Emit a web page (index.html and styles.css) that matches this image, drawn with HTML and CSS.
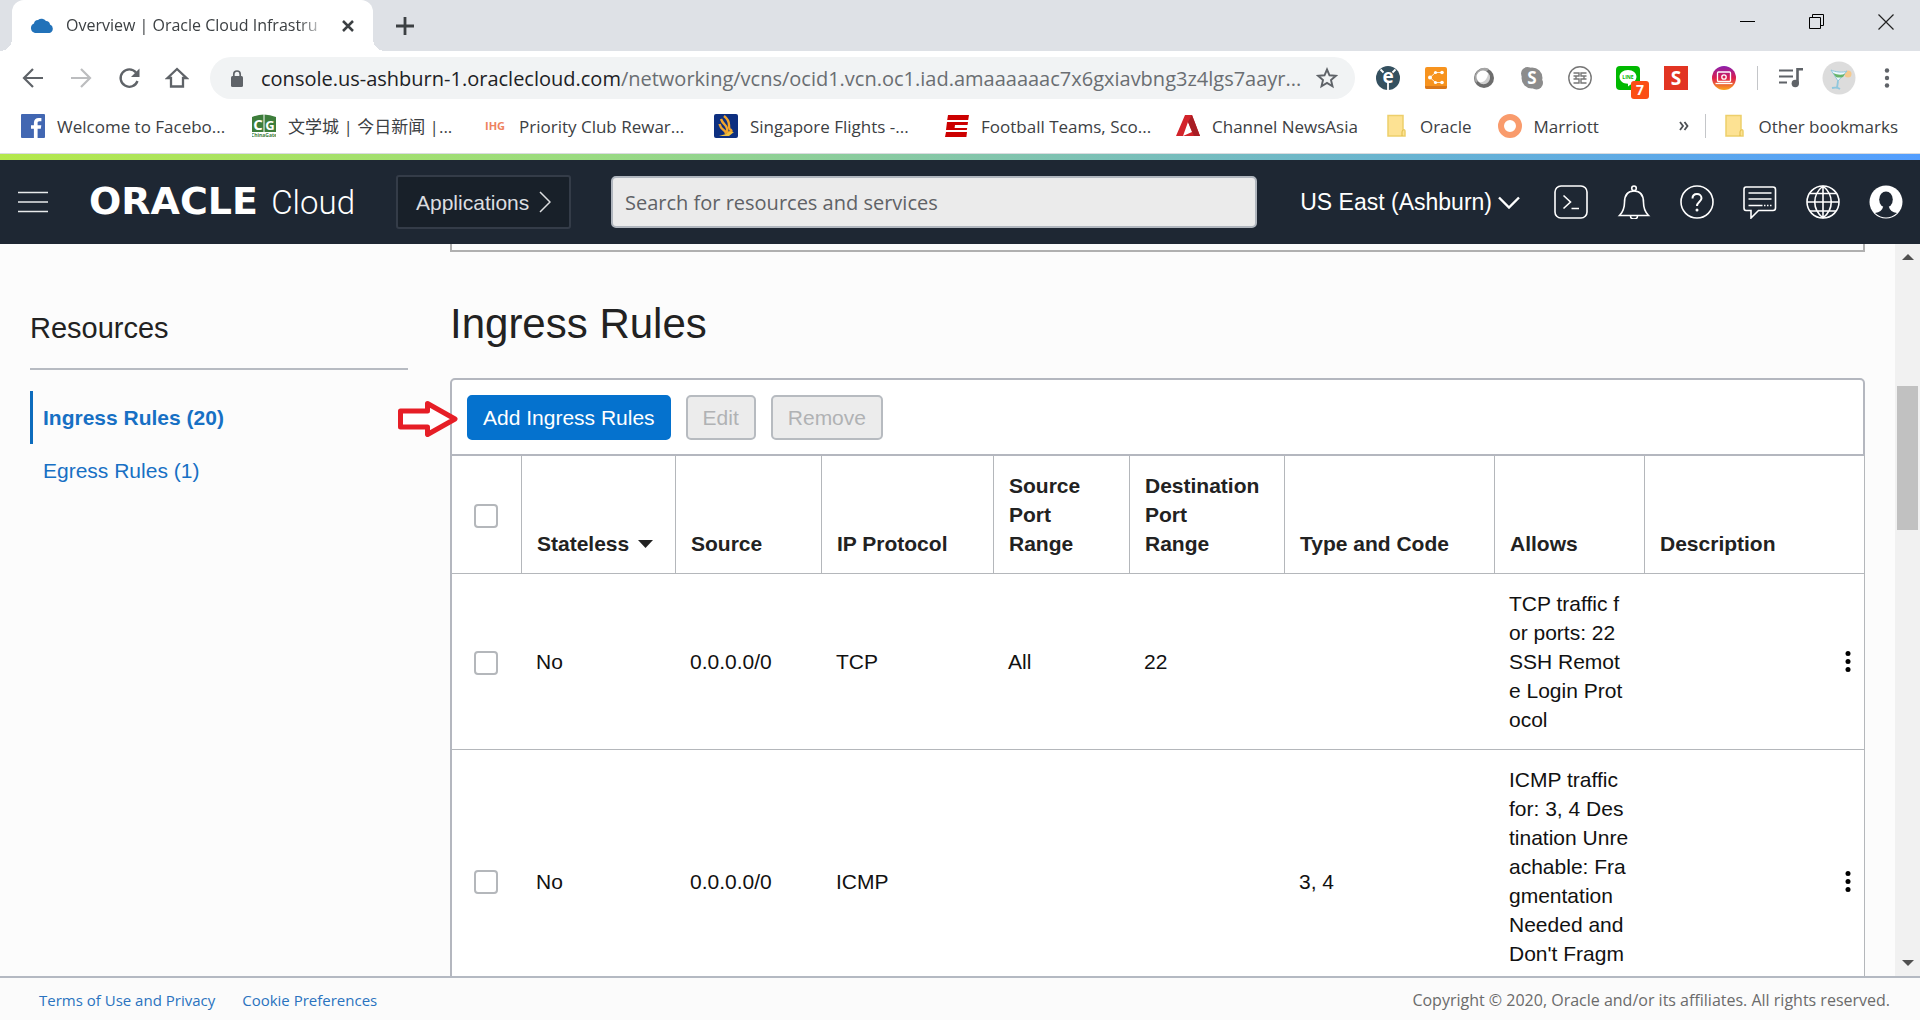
FILE: index.html
```html
<!DOCTYPE html>
<html lang="en">
<head>
<meta charset="utf-8">
<title>Overview | Oracle Cloud Infrastructure</title>
<link rel="stylesheet" href="styles.css">
</head>
<body>
<div class="tabstrip">
  <div class="tab">
    <svg class="tab-icon" width="24" height="16" viewBox="0 0 24 16"><path d="M5 15a5 5 0 0 1-1-9.500A4 4 0 0 1 8 2a5.500 5.500 0 0 1 8 1 4 4 0 0 1 4 3.500A4.500 4.500 0 0 1 19.500 15z" fill="#2272b9"/></svg>
    <span class="tab-title">Overview | Oracle Cloud Infrastru</span>
    <button class="plain" aria-label="Close tab"><svg width="14" height="14" viewBox="0 0 14 14"><path d="M2 2l10 10M12 2L2 12" stroke="#3c4043" stroke-width="2.500"/></svg></button>
  </div>
  <button class="plain new-tab" aria-label="New tab"><svg width="18" height="18" viewBox="0 0 18 18"><path d="M9 0v18M0 9h18" stroke="#3c4043" stroke-width="2.800"/></svg></button>
  <div class="window-controls">
    <button class="plain" aria-label="Minimize"><svg width="16" height="16" viewBox="0 0 16 16"><path d="M0 7.500h15" stroke="#000"/></svg></button>
    <button class="plain" aria-label="Restore"><svg width="16" height="16" viewBox="0 0 16 16" fill="none" stroke="#000"><path d="M.500 3.500h11v11H.500zM3.500 3.500V.500h11v11h-3"/></svg></button>
    <button class="plain" aria-label="Close"><svg width="16" height="16" viewBox="0 0 16 16"><path d="M.500.500l15 15M15.500.500l-15 15" stroke="#222" stroke-width="1.200"/></svg></button>
  </div>
</div>

<div class="toolbar">
  <div class="nav">
    <button class="plain" aria-label="Back"><svg width="24" height="24" viewBox="0 0 24 24" fill="none" stroke="#5f6368" stroke-width="2.200"><path d="M22 12H3.500M12 3l-9 9 9 9"/></svg></button>
    <button class="plain" aria-label="Forward"><svg width="24" height="24" viewBox="0 0 24 24" fill="none" stroke="#bcbdbf" stroke-width="2.200"><path d="M2 12h18.500M12 3l9 9-9 9"/></svg></button>
    <button class="plain" aria-label="Reload"><svg width="24" height="24" viewBox="0 0 24 24"><path d="M19 6.500A8.700 8.700 0 1 0 20.500 15" fill="none" stroke="#5f6368" stroke-width="2.300"/><path d="M22.500 2.500v8.500H14z" fill="#5f6368"/></svg></button>
    <button class="plain" aria-label="Home"><svg width="24" height="24" viewBox="0 0 24 24"><path d="M2.500 12L12 3l9.500 9H18v8.500H6V12z" fill="none" stroke="#5f6368" stroke-width="2.300"/></svg></button>
  </div>
  <div class="omnibox">
    <svg width="12" height="17" viewBox="0 0 12 17"><path d="M2.800 7V4.200a3.200 3.200 0 0 1 6.400 0V7" fill="none" stroke="#5f6368" stroke-width="1.700"/><rect y="6" width="12" height="11" rx="1.500" fill="#5f6368"/></svg>
    <span class="url"><b>console.us-ashburn-1.oraclecloud.com</b>/networking/vcns/ocid1.vcn.oc1.iad.amaaaaaac7x6gxiavbng3z4lgs7aayr...</span>
    <button class="plain" aria-label="Bookmark this page"><svg width="22" height="22" viewBox="0 0 22 22"><path d="M11 2.500l2.500 5.800 6.300.500-4.800 4.200 1.500 6.200L11 15.900l-5.500 3.300L7 13 2.200 8.800l6.300-.500z" fill="none" stroke="#5f6368" stroke-width="1.900"/></svg></button>
  </div>
  <div class="extensions">
    <svg width="24" height="24" viewBox="0 0 24 24"><circle cx="12" cy="12" r="12" fill="#34505f"/><path d="M4.500 3.500l3 3M19.500 3.500l-3 3M12 17v7" stroke="#fff" stroke-width="1.800"/><text x="12" y="17" text-anchor="middle" class="glyph" font-size="19" fill="#fff">e</text></svg>
    <svg width="24" height="24" viewBox="0 0 24 24"><rect x="1" y="1" width="22" height="22" rx="2" fill="#f7931e"/><path d="M1 20h22v1a2 2 0 0 1-2 2H3a2 2 0 0 1-2-2z" fill="#d9771a"/><g fill="#fff"><circle cx="6" cy="11.500" r="2"/><circle cx="11.500" cy="6.500" r="1.600"/><circle cx="11.500" cy="16.500" r="1.600"/><circle cx="18" cy="6.500" r="1.800"/><circle cx="18" cy="16.500" r="1.800"/></g><path d="M6 11.500l5.500-5H18M6 11.500l5.500 5H18" fill="none" stroke="#fff" stroke-width=".8"/></svg>
    <svg width="24" height="24" viewBox="0 0 24 24"><circle cx="12" cy="12" r="10" fill="#6d6d6d"/><path d="M4 17A10 10 0 0 1 17 3z" fill="#a5a5a5"/><circle cx="11" cy="11" r="6.500" fill="#fff"/><path d="M16 7a6.500 6.500 0 0 1-9 9.500c5 .5 9-4 9-9.500z" fill="#d0d0d0"/></svg>
    <svg width="24" height="24" viewBox="0 0 24 24" fill="#8c8c8c"><circle cx="12" cy="12" r="10.500"/><circle cx="7.500" cy="7.500" r="6.500"/><circle cx="16.500" cy="17" r="6.500"/><text x="12" y="18" text-anchor="middle" class="glyph" font-size="17" fill="#fff">S</text></svg>
    <svg width="24" height="24" viewBox="0 0 24 24" fill="none" stroke="#777"><circle cx="12" cy="12" r="11.200" stroke-width="1.400"/><path d="M5.500 7H11v3H5.500M18.500 7H13v3h5.500M5.500 13H11v4H5.500M18.500 13H13v4h5.500M8 10v3M16 10v3" stroke-width="1.400"/></svg>
    <span class="ext-line"><svg width="24" height="24" viewBox="0 0 24 24"><rect width="24" height="24" rx="4" fill="#00b900"/><path d="M12 4c5 0 8.500 3 8.500 6.800 0 3.700-4 6.700-8.500 9.700v-2.700C7 17.800 3.500 15 3.500 10.800 3.500 7 7 4 12 4z" fill="#fff"/><text x="12" y="13" text-anchor="middle" class="glyph" font-size="5" fill="#00b900">LINE</text></svg><span class="badge">7</span></span>
    <svg width="24" height="24" viewBox="0 0 24 24"><rect width="24" height="24" fill="#e23422"/><text x="12" y="19" text-anchor="middle" class="glyph" font-size="19" fill="#fff">S</text></svg>
    <svg width="24" height="24" viewBox="0 0 24 24"><defs><linearGradient id="ig" x1="0" y1="0" x2="0" y2="1"><stop offset="0" stop-color="#8a1fae"/><stop offset=".5" stop-color="#dc1e4e"/><stop offset="1" stop-color="#fba61c"/></linearGradient></defs><circle cx="12" cy="12" r="12" fill="url(#ig)"/><g fill="none" stroke="#fff" stroke-width="1.300"><rect x="5.500" y="6" width="13" height="9.500" rx="1"/><circle cx="12" cy="11" r="2.200"/><path d="M3.500 17.500h17"/></g></svg>
  </div>
  <span class="divider"></span>
  <div class="profile">
    <button class="plain" aria-label="Media"><svg width="24" height="24" viewBox="0 0 24 24"><path d="M0 4.500h14M0 10.500h14M0 16.500h8" stroke="#5f6368" stroke-width="2.200"/><path d="M18.500 17V3.300H24" fill="none" stroke="#5f6368" stroke-width="2.600"/><circle cx="16.300" cy="17.500" r="3.700" fill="#5f6368"/></svg></button>
    <button class="plain avatar" aria-label="Profile"><svg width="34" height="34" viewBox="0 0 34 34"><circle cx="17" cy="17" r="16.500" fill="#dcdcdc"/><circle cx="26" cy="13" r="3.500" fill="#f6c98c"/><path d="M9 9c4 2 12 3 16 1l-9 10z" fill="#eefaff" stroke="#8fc7dd"/><path d="M11 12q6 3 12 1l-2 3q-4 1-7 0z" fill="#67b46b"/><path d="M16 20l-1 7M10 27q5-1 8 1" fill="none" stroke="#8fc7dd" stroke-width="1.800"/></svg></button>
    <button class="plain" aria-label="Browser menu"><svg width="6" height="20" viewBox="0 0 6 20" fill="#5f6368"><circle cx="3" cy="2.500" r="2.200"/><circle cx="3" cy="10" r="2.200"/><circle cx="3" cy="17.500" r="2.200"/></svg></button>
  </div>
</div>

<nav class="bookmarks">
  <a class="bm bm-wide" href="#"><svg width="24" height="24" viewBox="0 0 24 24"><rect width="24" height="24" rx="1" fill="#4267b2"/><path d="M16.600 24v-9.300h3.200l.5-3.500h-3.700V9c0-1 .3-1.800 1.800-1.800h2V4c-.4 0-1.500-.100-2.800-.100-2.800 0-4.700 1.700-4.700 4.800v2.500H10v3.500h2.900V24z" fill="#fff"/></svg>Welcome to Facebo...</a>
  <a class="bm bm-wide" href="#"><svg width="24" height="24" viewBox="0 0 24 24"><path d="M0 3q12-5 24 0v15H0z" fill="#3d7d3b"/><path d="M12 0v18" stroke="#fff"/><g class="glyph" fill="#fff" text-anchor="middle"><text x="6" y="16" font-size="15">C</text><text x="18" y="16" font-size="13">G</text></g><text x="12" y="23" text-anchor="middle" class="glyph" font-size="5" fill="#3d7d3b">ChinaGate</text></svg>文学城 | 今日新闻 |...</a>
  <a class="bm bm-wide" href="#"><svg width="24" height="24" viewBox="0 0 24 24"><text x="12" y="16" text-anchor="middle" class="glyph" font-size="11" fill="#ee8260">IHG</text></svg>Priority Club Rewar...</a>
  <a class="bm bm-wide" href="#"><svg width="24" height="24" viewBox="0 0 24 24"><rect width="24" height="24" rx="2" fill="#0d2f80"/><g fill="none" stroke="#f2a52c" stroke-width="2.400"><path d="M10 2q5 4 5 9t2 5q2 2-4 3"/><path d="M7 5q1 3 4 6t2 8"/><path d="M5.500 10q1 4 4 6t2 4"/></g><path d="M5 22h10l5-4h-5l-3 2z" fill="#f2c13c"/></svg>Singapore Flights -...</a>
  <a class="bm bm-wide" href="#"><svg width="24" height="24" viewBox="0 0 24 24"><path d="M3 1h21l-.8 5H2.200zM2 8h21l-.4 3H10l-.4 3h12.600l-.4 2H1z M1 18h21l-.6 5H0z" fill="#cc0000"/></svg>Football Teams, Sco...</a>
  <a class="bm" href="#"><svg width="24" height="24" viewBox="0 0 24 24"><path d="M9 1h7l8 21H7l9-4-4-10-5 14H0z" fill="#d2232a"/><path d="M16 1l8 21h-6L12 8z" fill="#a81e24"/></svg>Channel NewsAsia</a>
  <a class="bm" href="#"><svg width="24" height="24" viewBox="0 0 24 24"><path d="M4 1.500h15v14q2 0 2 2V22H4z" fill="#fde293" stroke="#edcf6b" stroke-width="1.500"/><path d="M18 22v-4q0-2 1.500-2" fill="none" stroke="#e0bb45"/></svg>Oracle</a>
  <a class="bm" href="#"><svg width="24" height="24" viewBox="0 0 24 24"><circle cx="12" cy="12" r="9" fill="none" stroke="#f99b6c" stroke-width="6"/></svg>Marriott</a>
  <button class="plain more" aria-label="More bookmarks"><svg width="10" height="10" viewBox="0 0 10 10" fill="none" stroke="#4c5054" stroke-width="1.800"><path d="M1 1l3 4-3 4M5.500 1l3 4-3 4"/></svg></button>
  <span class="divider"></span>
  <a class="bm" href="#"><svg width="24" height="24" viewBox="0 0 24 24"><path d="M4 1.500h15v14q2 0 2 2V22H4z" fill="#fde293" stroke="#edcf6b" stroke-width="1.500"/><path d="M18 22v-4q0-2 1.500-2" fill="none" stroke="#e0bb45"/></svg>Other bookmarks</a>
</nav>

<header class="console-header">
  <button class="plain" aria-label="Menu"><svg width="30" height="22" viewBox="0 0 30 22"><path d="M0 1.500h30M0 11h30M0 20.500h30" stroke="#e8eaec" stroke-width="1.600"/></svg></button>
  <a class="brand" href="#"><span class="brand-name">ORACLE</span><span class="brand-cloud">Cloud</span></a>
  <button class="apps">Applications<svg width="12" height="22" viewBox="0 0 12 22"><path d="M1 1l10 10L1 21" fill="none" stroke="#dcdee0" stroke-width="1.500"/></svg></button>
  <input class="search" type="search" aria-label="Search" placeholder="Search for resources and services">
  <button class="plain region">US East (Ashburn)<svg width="22" height="13" viewBox="0 0 22 13"><path d="M1 1.500l10 10 10-10" fill="none" stroke="#fff" stroke-width="2.400"/></svg></button>
  <div class="header-icons">
    <button class="plain" aria-label="Cloud Shell"><svg width="34" height="34" viewBox="0 0 34 34"><rect x="1" y="1" width="32" height="32" rx="6"/><path d="M9.500 10.500l7 6.500-7 6.500M17.500 23.500h7.500"/></svg></button>
    <button class="plain" aria-label="Announcements"><svg width="34" height="34" viewBox="0 0 34 34"><circle cx="17" cy="3.300" r="2.300"/><path d="M2.500 30.500c3.500-3.500 5-7 5-13C7.500 10 11 6 17 6s9.500 4 9.500 11.500c0 6 1.500 9.500 5 13zM13.500 31a3.500 3 0 0 0 7 0"/></svg></button>
    <button class="plain" aria-label="Help"><svg width="34" height="34" viewBox="0 0 34 34"><circle cx="17" cy="17" r="16"/><path d="M12.500 13.500c0-3 2-4.500 4.500-4.500s4.500 1.800 4.500 4.200c0 3.300-4.500 3.800-4.500 7.800" stroke-width="2"/><circle cx="17" cy="25" r="1.500" fill="#fff" stroke="none"/></svg></button>
    <button class="plain" aria-label="Chat"><svg width="34" height="34" viewBox="0 0 34 34"><path d="M3 2h27q2.500 0 2.500 2.500v18.500q0 2.500-2.500 2.500H15.500L8 33v-7.500H3Q1 25.500 1 23V4.500Q1 2 3 2z"/><path d="M5.500 8h23M5.500 14h23M5.500 20.500h14"/><path d="M21 20.500h8" stroke-dasharray="1.500 1.500"/></svg></button>
    <button class="plain" aria-label="Language"><svg width="34" height="34" viewBox="0 0 34 34"><circle cx="17" cy="17" r="16"/><path d="M17 1v32M1 17h32M4 8.500h26M4 26h26M17 1C6 10 6 24 17 33M17 1c11 9 11 23 0 32"/></svg></button>
    <button class="plain" aria-label="Profile menu"><svg width="34" height="34" viewBox="0 0 34 34"><circle cx="17" cy="17" r="16.500" fill="#fff" stroke="none"/><ellipse cx="17" cy="14.500" rx="6.800" ry="8" fill="#1e2733" stroke="none"/><path d="M6 28q7-1 8-6h6q1 5 8 6-11 9-22 0z" fill="#1e2733" stroke="none"/></svg></button>
  </div>
</header>

<div class="content">
  <aside class="sidebar">
    <h2>Resources</h2>
    <ul>
      <li class="active"><a href="#">Ingress Rules (20)</a></li>
      <li><a href="#">Egress Rules (1)</a></li>
    </ul>
  </aside>
  <main>
    <div class="details-end"></div>
    <h1>Ingress Rules</h1>
    <div class="actions">
      <svg class="pointer" width="60" height="36" viewBox="0 0 60 36"><path d="M2.500 10H29.500V2.500L57 18 29.500 33.500V26H2.500z" fill="#fff" stroke="#e61e26" stroke-width="5" stroke-linejoin="round"/></svg>
      <button class="btn primary">Add Ingress Rules</button>
      <button class="btn" disabled>Edit</button>
      <button class="btn" disabled>Remove</button>
    </div>
    <table class="rules">
      <colgroup><col class="c-check"><col class="c-state"><col class="c-source"><col class="c-proto"><col class="c-sport"><col class="c-dport"><col class="c-type"><col class="c-allows"><col></colgroup>
      <thead>
        <tr>
          <th class="check"><input type="checkbox" aria-label="Select all rules"></th>
          <th><button class="plain sort">Stateless<svg width="15" height="8" viewBox="0 0 15 8"><path d="M0 0h15L7.500 8z" fill="#222"/></svg></button></th>
          <th>Source</th><th>IP Protocol</th><th>Source Port Range</th><th>Destination<br>Port<br>Range</th><th>Type and Code</th><th>Allows</th><th>Description</th>
        </tr>
      </thead>
      <tbody>
        <tr>
          <td class="check"><input type="checkbox" aria-label="Select TCP rule"></td>
          <td>No</td><td>0.0.0.0/0</td><td>TCP</td><td>All</td><td>22</td><td></td>
          <td class="allows">TCP traffic f<br>or ports: 22<br>SSH Remot<br>e Login Prot<br>ocol</td>
          <td class="menu"><button class="plain" aria-label="Rule actions"><svg width="6" height="21" viewBox="0 0 6 21"><circle cx="3" cy="2.500" r="2.500"/><circle cx="3" cy="10.500" r="2.500"/><circle cx="3" cy="18.500" r="2.500"/></svg></button></td>
        </tr>
        <tr>
          <td class="check"><input type="checkbox" aria-label="Select ICMP rule"></td>
          <td>No</td><td>0.0.0.0/0</td><td>ICMP</td><td></td><td></td><td>3, 4</td>
          <td class="allows">ICMP traffic<br>for: 3, 4 Des<br>tination Unre<br>achable: Fra<br>gmentation<br>Needed and<br>Don't Fragm<br>ent was Set</td>
          <td class="menu"><button class="plain" aria-label="Rule actions"><svg width="6" height="21" viewBox="0 0 6 21"><circle cx="3" cy="2.500" r="2.500"/><circle cx="3" cy="10.500" r="2.500"/><circle cx="3" cy="18.500" r="2.500"/></svg></button></td>
        </tr>
      </tbody>
    </table>
  </main>
  <div class="scrollbar">
    <svg width="12" height="6" viewBox="0 0 12 6"><path d="M0 6l6-6 6 6z" fill="#505050"/></svg>
    <div class="track"><div class="thumb"></div></div>
    <svg width="12" height="6" viewBox="0 0 12 6"><path d="M0 0h12L6 6z" fill="#505050"/></svg>
  </div>
</div>

<footer>
  <a href="#">Terms of Use and Privacy</a>
  <a href="#">Cookie Preferences</a>
  <span>Copyright © 2020, Oracle and/or its affiliates. All rights reserved.</span>
</footer>
</body>
</html>
```
FILE: styles.css
```css
* { box-sizing: border-box; }

body {
  margin: 0;
  height: 100vh;
  display: flex;
  flex-direction: column;
  overflow: hidden;
  background: #fcfcfc;
  color: #222;
  font: 21px/29px "Liberation Sans", Arial, sans-serif;
}

svg { display: block; flex: none; }
a { text-decoration: none; color: inherit; }
.plain { border: 0; padding: 0; margin: 0; background: none; font: inherit; color: inherit; flex: none; }
.glyph { font-family: "Open Sans", sans-serif; font-weight: 700; }
.divider { width: 1px; height: 24px; background: #c4c6c9; flex: none; }

/* Browser chrome */
.tabstrip, .toolbar, .bookmarks {
  font-family: "Open Sans", "Noto Sans CJK SC", sans-serif;
  background: #fff;
  flex: none;
  display: flex;
  align-items: center;
}

.tabstrip { height: 51px; background: #dee1e6; padding-left: 12px; }
.tab {
  position: relative;
  align-self: stretch;
  width: 361px;
  padding: 0 18px;
  display: flex;
  align-items: center;
  gap: 12px;
  background: #fff;
  border-radius: 12px 12px 0 0;
  font-size: 16px;
  color: #3c4043;
}
.tab::before, .tab::after {
  content: "";
  position: absolute;
  bottom: 0;
  width: 12px;
  height: 12px;
}
.tab::before { left: -12px; background: radial-gradient(circle at 0 0, #dee1e6 12px, #fff 12px); }
.tab::after { right: -12px; background: radial-gradient(circle at 100% 0, #dee1e6 12px, #fff 12px); }
.tab-title {
  flex: 1;
  min-width: 0;
  overflow: hidden;
  white-space: nowrap;
  -webkit-mask-image: linear-gradient(to right, #000 88%, transparent);
  mask-image: linear-gradient(to right, #000 88%, transparent);
}
.new-tab { margin-left: 23px; }
.window-controls { margin: 0 26px 8px auto; display: flex; gap: 53px; }

.toolbar { height: 54px; padding: 0 30px 0 21px; }
.nav { display: flex; gap: 24px; }
.omnibox {
  flex: 1;
  min-width: 0;
  height: 42px;
  margin: 0 21px;
  padding: 0 17px 0 21px;
  display: flex;
  align-items: center;
  border-radius: 21px;
  background: #f1f3f4;
}
.url { flex: 1; min-width: 0; margin: 0 8px 0 18px; overflow: hidden; white-space: nowrap; font-size: 20px; color: #6a6e72; }
.url b { font-weight: 400; color: #202124; }
.extensions { display: flex; gap: 24px; }
.ext-line { position: relative; }
.badge {
  position: absolute;
  left: 15px;
  top: 15px;
  width: 18px;
  height: 18px;
  border-radius: 3px;
  background: #fb4f14;
  color: #fff;
  font-size: 14px;
  font-weight: 700;
  line-height: 18px;
  text-align: center;
}
.toolbar .divider { margin: 0 21px; }
.profile { display: flex; align-items: center; gap: 19px; }
.profile .avatar { margin-right: 9px; }

.bookmarks { height: 49px; padding: 0 22px 6px 21px; gap: 26px; border-bottom: 1px solid #dadce0; font-size: 17px; color: #3c4043; }
.bm { display: flex; align-items: center; gap: 12px; white-space: nowrap; }
.bm-wide { width: 205px; flex: none; }
.more { margin-left: auto; }
.bookmarks .divider { margin: 0 -10px; }

/* Console header */
.console-header {
  flex: none;
  height: 90px;
  padding: 0 17px 0 18px;
  display: flex;
  align-items: center;
  border-top: 6px solid #84c6a9;
  border-image: linear-gradient(to right, #b4e84c, #9adb80 30%, #84c6a9 50%, #66b2d4 75%, #539eff) 1;
  border-width: 6px 0 0;
  background: #1e2733;
  color: #fff;
}
.brand { width: 266px; margin: 0 41px; display: flex; align-items: baseline; justify-content: space-between; }
.brand-name { font: 700 38px/40px "DejaVu Sans", sans-serif; }
.brand-cloud { font: 300 33px/40px Roboto, sans-serif; }
.apps {
  width: 175px;
  height: 54px;
  flex: none;
  padding: 0 18px;
  display: flex;
  align-items: center;
  justify-content: space-between;
  border: 2px solid #343c48;
  border-radius: 3px;
  background: #182029;
  color: #dcdee0;
  font: inherit;
}
.search {
  flex: 1;
  min-width: 0;
  height: 52px;
  margin: 0 43px 0 40px;
  padding: 0 12px;
  border: 2px solid #b0b6be;
  border-radius: 5px;
  background: #ebebeb;
  font: 20px/28px "Open Sans", sans-serif;
}
.search::placeholder { color: #5f6266; opacity: 1; }
.region { display: flex; align-items: center; gap: 6px; font-size: 23px; }
.header-icons { display: flex; gap: 29px; margin-left: 34px; }
.header-icons svg { fill: none; stroke: #fff; stroke-width: 1.600; }

/* Page */
.content { flex: 1; min-height: 0; overflow: hidden; display: flex; }
.sidebar { width: 408px; flex: none; padding: 63px 0 0 30px; }
.sidebar h2 { margin: 0 0 21px; padding-bottom: 19px; border-bottom: 2px solid #b7bbc2; font-size: 29px; line-height: 42px; font-weight: 400; }
.sidebar ul { margin: 0; padding: 0; list-style: none; color: #1770c4; }
.sidebar li { padding: 12px 10px; border-left: 3px solid transparent; }
.sidebar .active { border-color: #0d6cbd; font-weight: 700; }

main { flex: 1; min-width: 0; margin: 0 30px 0 42px; }
.details-end { height: 8px; border: 2px solid #b0b0b0; border-top: 0; }
h1 { margin: 43px 0 25px; font-size: 42px; line-height: 58px; font-weight: 400; }

.actions { position: relative; display: flex; gap: 15px; padding: 15px 15px 14px; border: 2px solid #b4b7bf; border-radius: 5px 5px 0 0; background: #fff; }
.pointer { position: absolute; left: -54px; top: 21px; }
.btn { height: 45px; padding: 0 15px; border: 2px solid #b7bbc0; border-radius: 5px; background: #ececec; color: #b0b2b4; font: inherit; }
.primary { padding: 0 14px; border-color: #0572ce; background: #0572ce; color: #fff; }

.rules {
  width: 100%;
  table-layout: fixed;
  border-collapse: separate;
  border-spacing: 0;
  border-left: 2px solid #b4b7bf;
  border-right: 1px solid #b4b7bb;
  background: #fff;
}
.c-check { width: 70px; }
.c-state { width: 154px; }
.c-source { width: 146px; }
.c-proto { width: 172px; }
.c-sport { width: 136px; }
.c-dport { width: 155px; }
.c-type { width: 210px; }
.c-allows { width: 150px; }
.rules th, .rules td { padding: 15px 14px; border-bottom: 1px solid #b4b7bb; text-align: left; }
.rules th { padding-left: 15px; border-right: 1px solid #b4b7bb; vertical-align: bottom; }
.rules th:last-child { border-right: 0; }
.rules td { color: #111; vertical-align: middle; }
.rules .check { padding: 2px 22px 0; vertical-align: middle; }
.rules .allows { white-space: nowrap; }
.rules .menu { padding: 0 13px; }
.menu button { display: block; margin-left: auto; }
.sort { display: flex; align-items: center; gap: 9px; }
.check input { appearance: none; display: block; width: 24px; height: 24px; margin: 0; border: 2px solid #b4b7bb; border-radius: 4px; background: #fff; }

.scrollbar { width: 25px; flex: none; padding: 10px 2px; display: flex; flex-direction: column; align-items: center; background: #f1f1f1; }
.track { flex: 1; width: 100%; padding-top: 126px; }
.thumb { height: 144px; background: #c1c1c1; }

footer { flex: none; height: 44px; padding: 2px 30px 0 39px; display: flex; align-items: center; gap: 27px; border-top: 2px solid #b4b9c2; background: #fbfbfb; font: 16px/24px "Open Sans", sans-serif; color: #6b6b6b; }
footer a { font-size: 15px; color: #2a73bf; }
footer span { margin-left: auto; }
```
